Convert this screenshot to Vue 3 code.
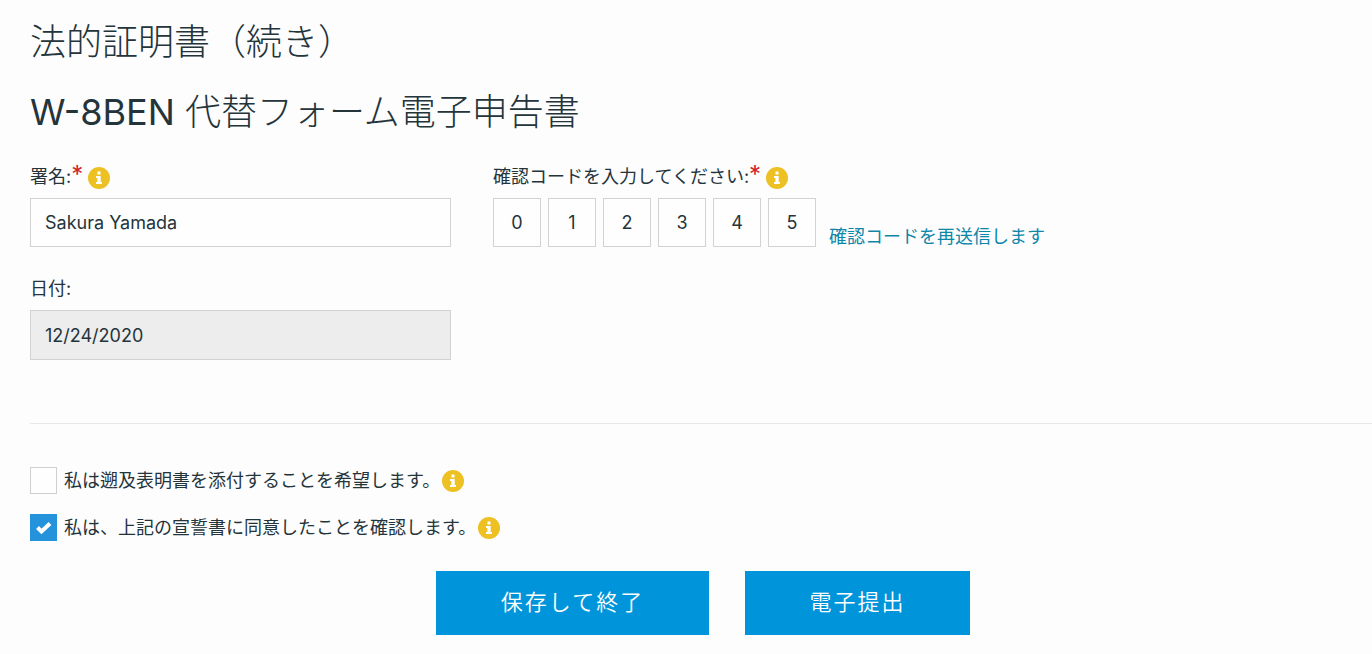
<script setup>
import { ref } from 'vue'
const name = ref('Sakura Yamada')
const date = ref('12/24/2020')
const digits = ref(['0', '1', '2', '3', '4', '5'])
const attach = ref(false)
const agree = ref(true)
</script>

<template>
  <main class="page">
    <h1>法的証明書（続き）</h1>
    <h2><span class="latin">W-8BEN</span> 代替フォーム電子申告書</h2>
    <form @submit.prevent>
      <div class="row">
        <div class="field">
          <div class="label-row">
            <label for="name">署名:<span class="req">*</span></label>
            <svg class="info" viewBox="0 0 22 22"><circle cx="11" cy="11" r="11" /><path d="M9.5 4.5h3v3h-3zM8 9h4.7v6H14v2H8v-2h1.4v-4H8z" /></svg>
          </div>
          <input id="name" v-model="name" type="text" class="text" />
        </div>
        <div class="code-field">
          <div class="label-row">
            <label for="code0">確認コードを入力してください:<span class="req">*</span></label>
            <svg class="info" viewBox="0 0 22 22"><circle cx="11" cy="11" r="11" /><path d="M9.5 4.5h3v3h-3zM8 9h4.7v6H14v2H8v-2h1.4v-4H8z" /></svg>
          </div>
          <div class="code-row">
            <input v-for="(d, i) in digits" :id="'code' + i" :key="i" v-model="digits[i]" type="text" maxlength="1" class="digit" :aria-label="i ? '確認コード ' + (i + 1) : null" />
            <a href="#" class="resend">確認コードを再送信します</a>
          </div>
        </div>
      </div>
      <div class="field date">
        <div class="label-row"><label for="date">日付:</label></div>
        <input id="date" v-model="date" type="text" class="text" readonly />
      </div>
      <hr />
      <div class="check">
        <label for="attach"><span class="box"><input id="attach" v-model="attach" type="checkbox" /><svg v-if="attach" class="tick" viewBox="0 0 27 27"><path d="M7.5 13.5l4 4L20 9.500" /></svg></span><span>私は遡及表明書を添付することを希望します。</span></label>
        <svg class="info" viewBox="0 0 22 22"><circle cx="11" cy="11" r="11" /><path d="M9.5 4.5h3v3h-3zM8 9h4.7v6H14v2H8v-2h1.4v-4H8z" /></svg>
      </div>
      <div class="check">
        <label for="agree"><span class="box"><input id="agree" v-model="agree" type="checkbox" /><svg v-if="agree" class="tick" viewBox="0 0 27 27"><path d="M7.5 13.5l4 4L20 9.500" /></svg></span><span>私は、上記の宣誓書に同意したことを確認します。</span></label>
        <svg class="info" viewBox="0 0 22 22"><circle cx="11" cy="11" r="11" /><path d="M9.5 4.5h3v3h-3zM8 9h4.7v6H14v2H8v-2h1.4v-4H8z" /></svg>
      </div>
      <div class="actions">
        <button type="button" class="save">保存して終了</button>
        <button type="submit">電子提出</button>
      </div>
    </form>
  </main>
</template>

<style>
body { background: #fdfdfd; }
</style>
<style scoped>
.page { padding: 16px 0 19px 30px; color: #24343b; font: 18px/26px Inter, "Noto Sans CJK JP", sans-serif; }
* { box-sizing: border-box; }
h1, h2 { margin: 0; font-size: 36px; line-height: 52px; font-weight: 300; }
h2 { margin-top: 18px; }
.latin { font-weight: 400; }
.row { display: flex; gap: 42px; margin-top: 26px; }
.field { width: 421px; }
.date { margin-top: 29px; }
.label-row { display: flex; align-items: center; height: 26px; gap: 5px; margin-bottom: 8px; }
.req { color: #d2232a; font-size: 24px; line-height: 20px; }
.info { width: 22px; height: 22px; fill: #edc024; flex: none; }
.label-row .info { margin-top: 2px; }
.info path { fill: #fff; }
input { font: inherit; color: inherit; margin: 0; }
.text { display: block; width: 100%; height: 49px; padding: 0 14px; border: 1px solid #d2d2d2; background: #fefefe; border-radius: 0; }
.text[readonly] { background: #ededed; height: 50px; }
.code-row { display: flex; gap: 7px; }
.digit { width: 48px; height: 49px; padding: 0; text-align: center; border: 1px solid #d2d2d2; background: #fefefe; border-radius: 0; }
.resend { align-self: flex-end; margin-left: 6px; line-height: 20px; color: #0d86a8; text-decoration: none; }
hr { margin: 63px 0 43px; border: 0; border-top: 1px solid #e6e8e8; }
.check { display: flex; align-items: center; gap: 2px; margin-bottom: 20px; }
.check label { display: flex; align-items: center; gap: 7px; }
.box { display: grid; width: 27px; height: 27px; }
.box > * { grid-area: 1 / 1; }
.box input { appearance: none; width: 27px; height: 27px; border: 1px solid #d0d0d0; background: #fefefe; }
.box input:checked { border-color: #2592dc; background: #2592dc; }
.tick { width: 27px; height: 27px; fill: none; stroke: #fff; stroke-width: 4; pointer-events: none; }
.actions { display: flex; justify-content: center; gap: 36px; margin-top: 30px; padding-left: 4px; }
button { width: 225px; height: 64px; padding: 0 0 2px; border: 0; color: #fff; background: #0095da; font: 350 22px/32px Inter, "Noto Sans CJK JP", sans-serif; letter-spacing: 2px; }
.save { width: 273px; }
</style>
